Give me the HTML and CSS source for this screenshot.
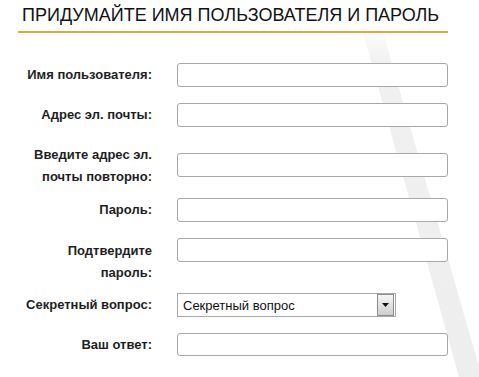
FILE: index.html
```html
<!DOCTYPE html>
<html lang="ru">
<head>
<meta charset="utf-8">
<title>Регистрация</title>
<link rel="stylesheet" href="styles.css">
</head>
<body>
<svg class="stripe" width="479" height="377" viewBox="0 0 479 377" aria-hidden="true">
  <defs>
    <linearGradient id="fade" x1="0" y1="0" x2="0" y2="1">
      <stop offset="0" stop-color="#ffffff"/>
      <stop offset="0.12" stop-color="#f0f0f0"/>
      <stop offset="1" stop-color="#eeeeee"/>
    </linearGradient>
  </defs>
  <polygon points="360,22 380,22 482,377 459,377" fill="url(#fade)"/>
</svg>
<main class="page">
  <h1 class="title">ПРИДУМАЙТЕ ИМЯ ПОЛЬЗОВАТЕЛЯ И ПАРОЛЬ</h1>
  <form class="form">
    <div class="row row-1">
      <label class="label">Имя пользователя:</label>
      <input class="field" type="text">
    </div>
    <div class="row row-2">
      <label class="label">Адрес эл. почты:</label>
      <input class="field" type="text">
    </div>
    <div class="row row-3 multi">
      <label class="label">Введите адрес эл.<br>почты повторно:</label>
      <input class="field field-off9" type="text">
    </div>
    <div class="row row-4">
      <label class="label">Пароль:</label>
      <input class="field" type="password">
    </div>
    <div class="row row-5 multi">
      <label class="label label-off2">Подтвердите<br>пароль:</label>
      <input class="field" type="password">
    </div>
    <div class="row row-6">
      <label class="label">Секретный вопрос:</label>
      <div class="select">
        <span class="select-text">Секретный вопрос</span>
        <span class="select-btn"><svg width="7" height="4" viewBox="0 0 7 4"><polygon points="0,0 7,0 3.5,4" fill="#111"/></svg></span>
      </div>
    </div>
    <div class="row row-7">
      <label class="label">Ваш ответ:</label>
      <input class="field field-short" type="text">
    </div>
  </form>
</main>
</body>
</html>
```
FILE: styles.css
```css
html, body {
  margin: 0;
  padding: 0;
  background: #ffffff;
}
body {
  width: 479px;
  height: 377px;
  overflow: hidden;
  position: relative;
  font-family: "Liberation Sans", Arial, sans-serif;
}
.stripe {
  position: absolute;
  left: 0;
  top: 0;
  z-index: 0;
}
.page {
  position: relative;
  z-index: 1;
  margin-left: 18px;
  width: 430px;
}
.title {
  margin: 0;
  padding: 5px 0 5px 4px;
  font-size: 18px;
  line-height: 21px;
  font-weight: normal;
  color: #111;
  border-bottom: 2px solid #e0a838;
}
.form {
  display: flex;
  flex-direction: column;
}
.row {
  display: flex;
  align-items: center;
  gap: 25px;
}
.row.multi {
  align-items: flex-start;
}
.row-1 { margin-top: 30px; }
.row-2 { margin-top: 16px; }
.row-3 { margin-top: 17px; }
.row-4 { margin-top: 10px; }
.row-5 { margin-top: 16px; }
.row-6 { margin-top: 9px; }
.row-7 { margin-top: 16px; }
.label {
  width: 134px;
  flex: none;
  text-align: right;
  font-size: 13px;
  font-weight: bold;
  line-height: 22px;
  color: #1e1e1e;
}
.label-off2 {
  margin-top: 2px;
}
.field {
  box-sizing: border-box;
  width: 271px;
  height: 24px;
  margin: 0;
  padding: 2px 5px;
  border: 1px solid #a8a8a8;
  border-radius: 3px;
  background: #fff;
  font-family: inherit;
  font-size: 13px;
}
.field-off9 {
  margin-top: 9px;
}
.field-short {
  height: 23px;
}
.select {
  box-sizing: border-box;
  width: 219px;
  height: 24px;
  border: 1px solid #a9a9a9;
  background: #fff;
  display: flex;
  align-items: center;
  justify-content: space-between;
  padding: 0 1px 0 5px;
}
.select-text {
  font-size: 13px;
  color: #111;
}
.select-btn {
  box-sizing: border-box;
  width: 17px;
  height: 22px;
  border: 1px solid #8c8c8c;
  background: linear-gradient(#f6f6f6, #cdcdcd);
  display: flex;
  align-items: center;
  justify-content: center;
}
```
